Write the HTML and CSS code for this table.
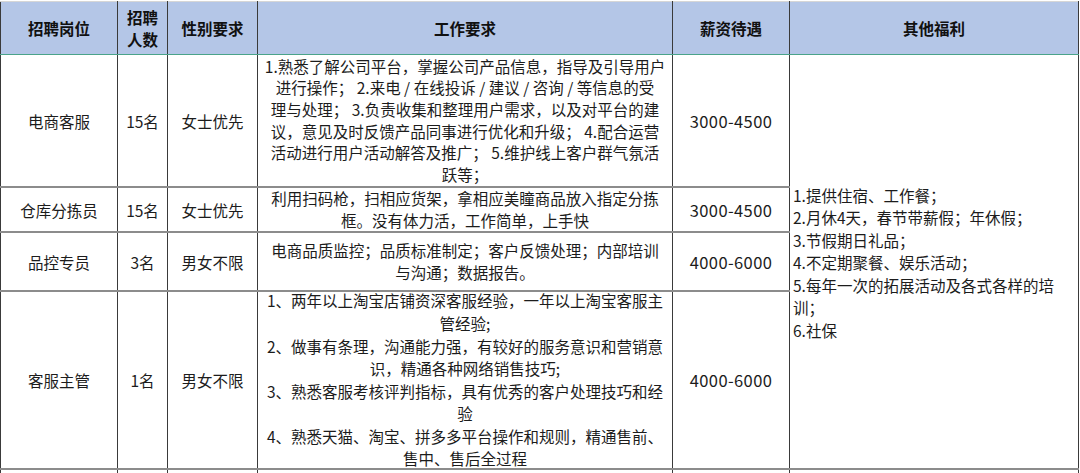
FILE: index.html
```html
<!DOCTYPE html>
<html lang="zh-CN">
<head>
<meta charset="utf-8">
<title>招聘岗位</title>
<link rel="stylesheet" href="styles.css">
</head>
<body>
<table class="jobs">
  <colgroup>
    <col class="c-pos"><col class="c-num"><col class="c-sex"><col class="c-req"><col class="c-pay"><col class="c-ben">
  </colgroup>
  <thead>
    <tr class="head">
      <th>招聘岗位</th>
      <th><span class="stack">招聘<br>人数</span></th>
      <th>性别要求</th>
      <th>工作要求</th>
      <th>薪资待遇</th>
      <th>其他福利</th>
    </tr>
  </thead>
  <tbody>
    <tr class="r1">
      <td>电商客服</td>
      <td>15名</td>
      <td>女士优先</td>
      <td class="req">
        <div class="lines">
          <div>1.熟悉了解公司平台，掌握公司产品信息，指导及引导用户</div>
          <div>进行操作； 2.来电 / 在线投诉 / 建议 / 咨询 / 等信息的受</div>
          <div>理与处理； 3.负责收集和整理用户需求，以及对平台的建</div>
          <div>议，意见及时反馈产品同事进行优化和升级； 4.配合运营</div>
          <div>活动进行用户活动解答及推广； 5.维护线上客户群气氛活</div>
          <div>跃等；</div>
        </div>
      </td>
      <td class="pay">3000-4500</td>
      <td class="ben" rowspan="4">
        <div class="ben-lines">
          <div>1.提供住宿、工作餐；</div>
          <div>2.月休4天，春节带薪假；年休假；</div>
          <div>3.节假期日礼品；</div>
          <div>4.不定期聚餐、娱乐活动；</div>
          <div>5.每年一次的拓展活动及各式各样的培</div>
          <div>训；</div>
          <div>6.社保</div>
        </div>
      </td>
    </tr>
    <tr class="r2">
      <td>仓库分拣员</td>
      <td>15名</td>
      <td>女士优先</td>
      <td class="req">
        <div class="lines">
          <div>利用扫码枪，扫相应货架，拿相应美瞳商品放入指定分拣</div>
          <div>框。没有体力活，工作简单，上手快</div>
        </div>
      </td>
      <td class="pay">3000-4500</td>
    </tr>
    <tr class="r3">
      <td>品控专员</td>
      <td>3名</td>
      <td>男女不限</td>
      <td class="req">
        <div class="lines">
          <div>电商品质监控；品质标准制定；客户反馈处理；内部培训</div>
          <div>与沟通；数据报告。</div>
        </div>
      </td>
      <td class="pay">4000-6000</td>
    </tr>
    <tr class="r4">
      <td>客服主管</td>
      <td>1名</td>
      <td>男女不限</td>
      <td class="req">
        <div class="lines tall">
          <div>1、两年以上淘宝店铺资深客服经验，一年以上淘宝客服主</div>
          <div>管经验;</div>
          <div>2、做事有条理，沟通能力强，有较好的服务意识和营销意</div>
          <div>识，精通各种网络销售技巧;</div>
          <div>3、熟悉客服考核评判指标，具有优秀的客户处理技巧和经</div>
          <div>验</div>
          <div>4、熟悉天猫、淘宝、拼多多平台操作和规则，精通售前、</div>
          <div>售中、售后全过程</div>
        </div>
      </td>
      <td class="pay">4000-6000</td>
    </tr>
    <tr class="r5">
      <td></td><td></td><td></td><td></td><td></td><td></td>
    </tr>
  </tbody>
</table>
</body>
</html>
```

FILE: styles.css
```css
html, body {
  margin: 0;
  padding: 0;
  background: #ffffff;
  overflow: hidden;
}

body {
  font-family: "Noto Sans CJK SC", "Noto Sans", sans-serif;
  color: #1c1c1c;
  font-size: 15.5px;
}

.jobs {
  border-collapse: collapse;
  table-layout: fixed;
  width: 1078px;
  margin-top: 1px;
}

.c-pos { width: 117px; }
.c-num { width: 50px; }
.c-sex { width: 90px; }
.c-req { width: 415px; }
.c-pay { width: 117px; }
.c-ben { width: 289px; }

.jobs th,
.jobs td {
  padding: 0;
  text-align: center;
  vertical-align: middle;
  white-space: nowrap;
  border-left: 1px solid #3a3a3a;
  border-right: 1px solid #3a3a3a;
  border-bottom: 2px solid #8c8c8c;
}

.head th {
  height: 52px;
  background: #b4c6e7;
  font-weight: 700;
  color: #111111;
  border-top: 1px solid #d6d6d6;
  border-bottom: 1px solid #4aa38a;
  line-height: 22px;
}

.stack {
  display: inline-block;
}

.r1 td { height: 131px; }
.r2 td { height: 42px; }
.r3 td { height: 57px; }
.r4 td { height: 176px; }
.r5 td { height: 10px; border-bottom: none; }

.lines {
  line-height: 21.6px;
}

.lines.tall {
  line-height: 22.6px;
  margin: -5px 0 -4px;
}

.pay {
  font-size: 16.5px;
  letter-spacing: 0.4px;
}

.jobs .ben {
  text-align: left;
}

.ben-lines {
  padding-left: 3px;
  padding-top: 2px;
  line-height: 22.5px;
}
```
